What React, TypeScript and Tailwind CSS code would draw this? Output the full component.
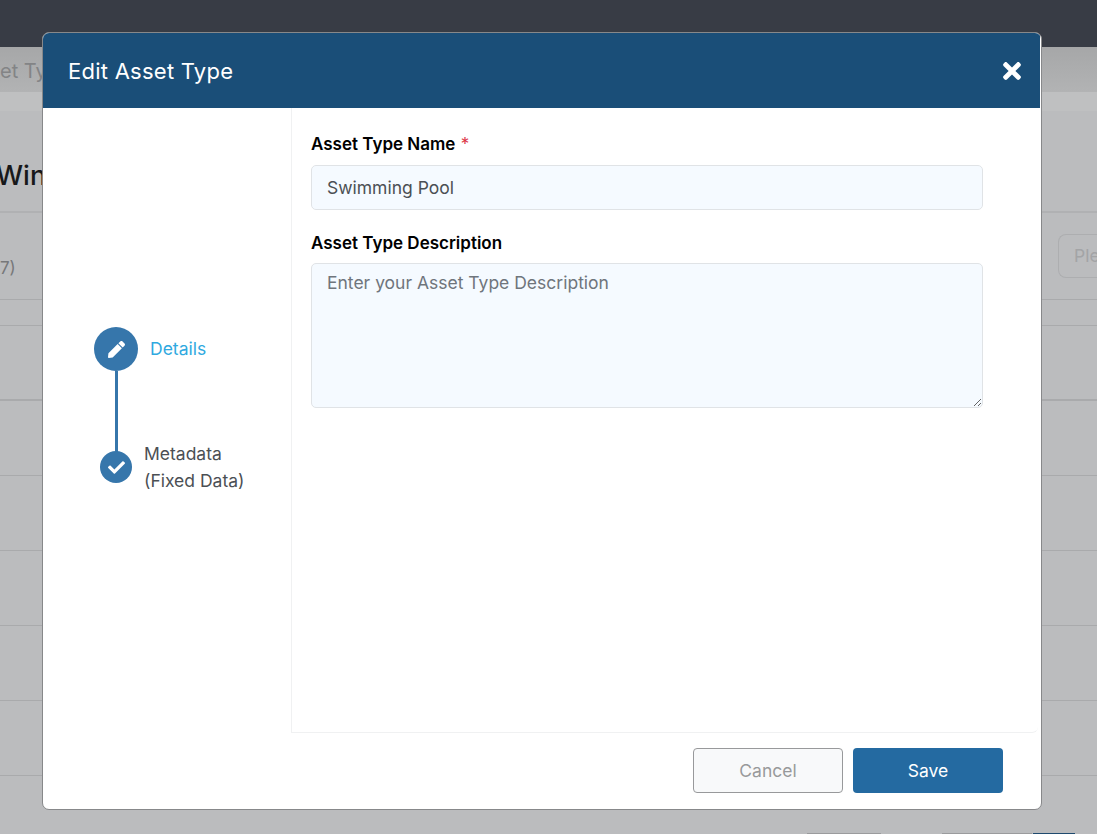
import React from "react";
import { FaPen, FaCheck, FaTimes } from "react-icons/fa";

function Row({ h, thick }: { h: string; thick?: boolean }) {
  return <div className={`${h} ${thick ? "border-b-2 border-[#a9aaac]" : "border-b border-[#a9aaac]"}`} />;
}

export default function App() {
  return (
    <div className="relative h-[834px] w-[1097px] overflow-hidden bg-[#bbbcbe] font-['Inter',sans-serif]">
      {/* Page behind the overlay */}
      <div className="h-[47px] bg-[#383c45]" />
      <div className="h-[45px] bg-gradient-to-b from-[#a6a7a8] to-[#b2b3b4] text-[20px] leading-[48px] text-[#838486]">
        <span className="block whitespace-nowrap">et Ty</span>
      </div>
      <div className="h-[19px] bg-[#bfc0c1]" />
      <div className="flex h-[102px] items-center overflow-hidden border-b-2 border-[#b0b1b3]">
        <span className="-ml-[4px] mt-[30px] text-[27px] font-medium text-[#17181a]">Win</span>
      </div>
      <div className="flex h-[87px] items-center justify-between border-b border-[#a9aaac]">
        <span className="mt-[26px] text-[17px] text-[#77787a]">7)</span>
        <div className="mt-[-1px] h-[44px] w-[39px] overflow-hidden whitespace-nowrap rounded-l-[8px] border border-r-0 border-[#adaeb0] pl-[15px] text-[17.5px] leading-[42px] text-[#a3a4a6]">Ple</div>
      </div>
      <Row h="h-[26px]" />
      <Row h="h-[75px]" thick />
      <Row h="h-[75px]" />
      <Row h="h-[75px]" />
      <Row h="h-[75px]" />
      <Row h="h-[75px]" />
      <Row h="h-[75px]" />
      <div className="flex justify-end pr-[22px] pt-[57px]">
        <div className="mr-[61px] h-[2px] w-[74px] bg-[#9a9b9d]" />
        <div className="mr-[1px] h-[2px] w-[90px] bg-[#9a9b9d]" />
        <div className="h-[2px] w-[42px] bg-[#1f4a6e]" />
      </div>

      {/* Modal */}
      <div className="absolute left-[42px] top-[32px] flex h-[778px] w-[1000px] flex-col overflow-hidden rounded-[7px] border border-[#87888a] bg-white">
        <div className="mr-[1px] flex h-[75px] shrink-0 items-center justify-between bg-[#1a4e78] pl-[25px] pr-[15px] pt-[1px] text-white">
          <h1 className="text-[22px] font-normal tracking-[0.25px]">Edit Asset Type</h1>
          <FaTimes className="h-[26px] w-[26px]" />
        </div>
        <div className="mr-[3px] flex h-[625px] shrink-0">
          <div className="w-[248px] shrink-0 pl-[51px] pt-[219px]">
            <div className="flex items-center gap-3">
              <div className="flex h-[44px] w-[44px] items-center justify-center rounded-full bg-[#3676ab] text-white">
                <FaPen className="h-[17px] w-[17px]" />
              </div>
              <span className="text-[17.5px] text-[#2fa9e0]">Details</span>
            </div>
            <div className="ml-[21px] h-[81px] w-[3px] bg-[#3676ab]" />
            <div className="-mt-[12px] flex items-center gap-3">
              <div className="flex w-[44px] justify-center">
                <div className="relative flex h-[32px] w-[32px] items-center justify-center rounded-full bg-[#3676ab] text-white">
                  <FaCheck className="h-[17px] w-[17px]" />
                </div>
              </div>
              <span className="-ml-[6px] text-[17.5px] leading-[27px] text-[#4b4f54]">Metadata<br />(Fixed Data)</span>
            </div>
          </div>
          <div className="flex-1 rounded-br-[6px] border-b border-l border-[#f0f1f2] pl-[19px] pt-[24px]">
            <label className="block text-[17px] font-semibold leading-[24px] text-black">
              Asset Type Name <span className="ml-[1px] font-normal text-[#dc3545]">*</span>
            </label>
            <input
              readOnly
              value="Swimming Pool"
              className="mt-[9px] block h-[45px] w-[672px] rounded-[5px] border border-[#e0e3e6] bg-[#f5faff] px-[15px] text-[17.5px] text-[#4b4f54] outline-none"
            />
            <label className="mt-[21px] block text-[17px] font-semibold leading-[24px] text-black">Asset Type Description</label>
            <textarea
              readOnly
              placeholder="Enter your Asset Type Description"
              className="mt-[8px] block h-[145px] w-[672px] rounded-[5px] border border-[#e0e3e6] bg-[#f5faff] px-[15px] py-[7px] text-[17.5px] leading-[24px] text-[#4b4f54] outline-none placeholder:text-[#6f757c]"
            />
          </div>
        </div>
        <div className="flex flex-1 items-start justify-end gap-[10px] pr-[38px] pt-[15px]">
          <button className="h-[45px] w-[150px] rounded-[4px] border border-[#98999b] bg-[#f8f9fa] pt-[1px] text-[17.5px] text-[#98999b]">Cancel</button>
          <button className="h-[45px] w-[150px] rounded-[4px] bg-[#246aa1] pt-[1px] text-[17.5px] text-white">Save</button>
        </div>
      </div>
    </div>
  );
}
